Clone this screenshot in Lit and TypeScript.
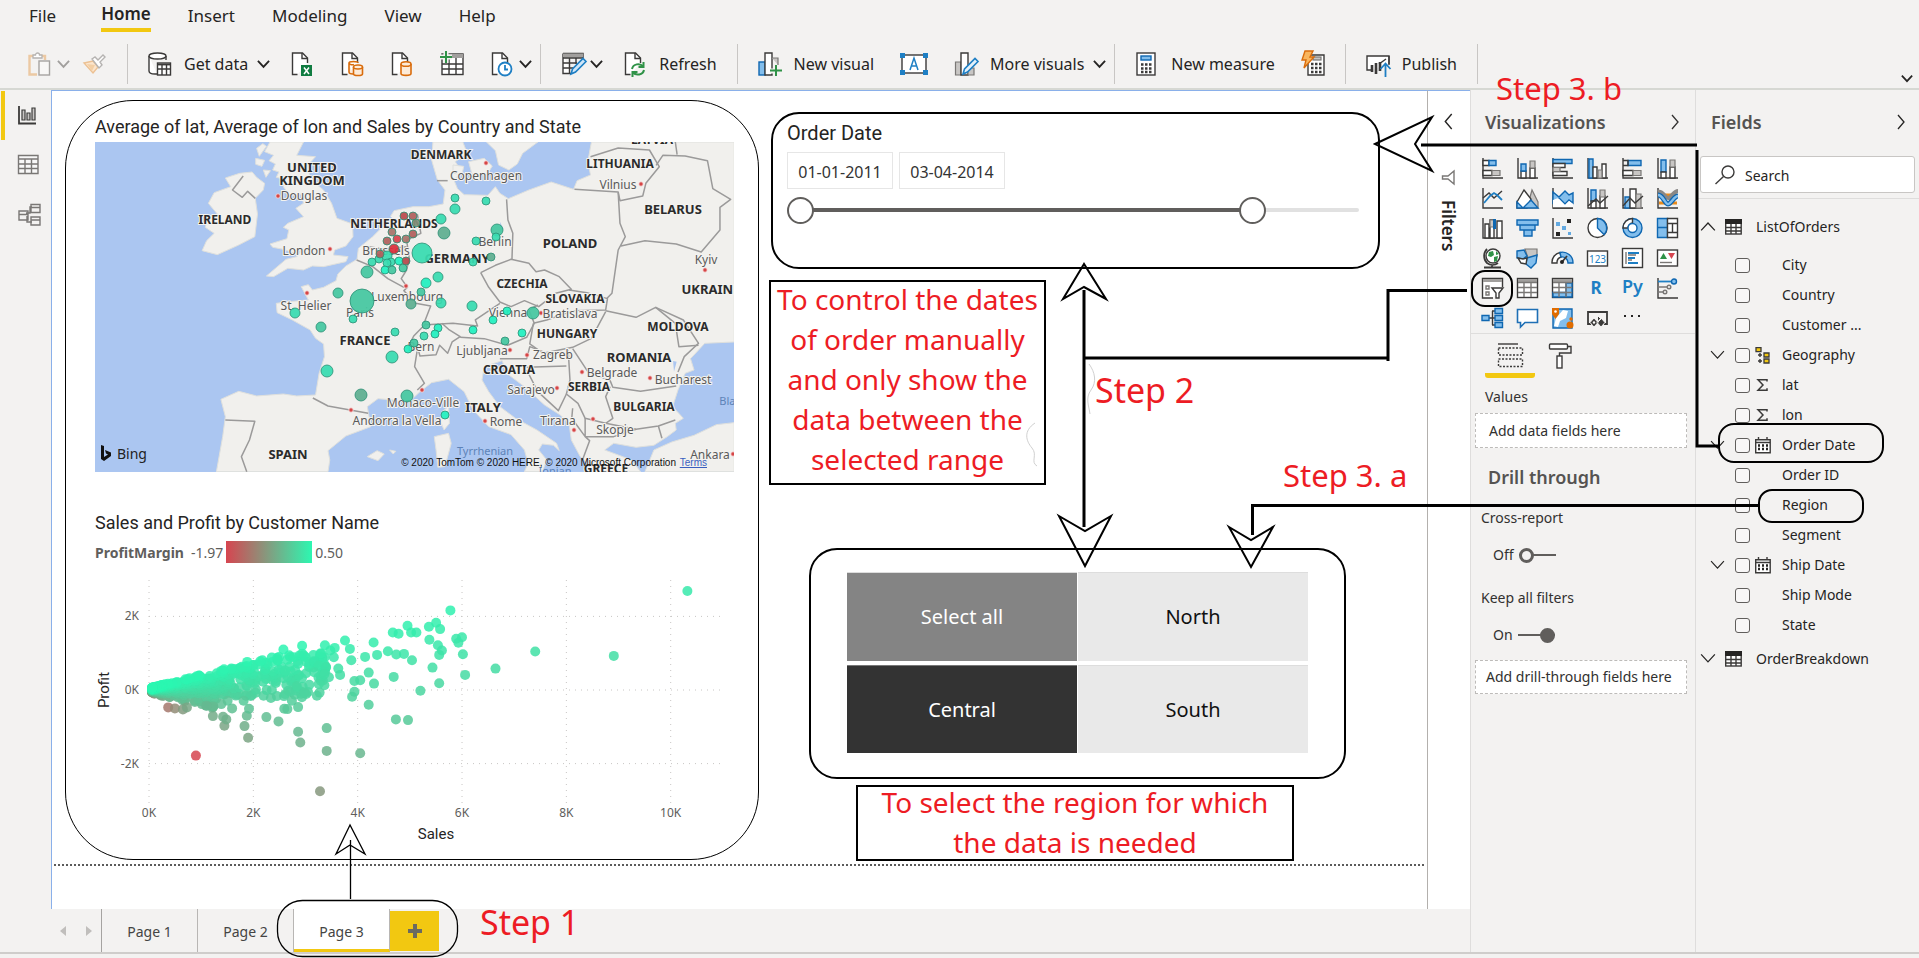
import { LitElement, html, css, svg, nothing } from 'lit';
import { customElement, state } from 'lit/decorators.js';
import { classMap } from 'lit/directives/class-map.js';

/* ---------- shared icon styles ---------- */
const iconCss = css`
  svg { display: block; overflow: visible; }
  .k { fill: none; stroke: #3b3a39; stroke-width: 1.4; }
  .k2 { fill: none; stroke: #3b3a39; stroke-width: 1.8; }
  .w { fill: #fff; stroke: #3b3a39; stroke-width: 1.4; }
  .b { fill: #83beec; stroke: #0f67b1; stroke-width: 1.4; }
  .bl { fill: none; stroke: #1e7fc4; stroke-width: 1.8; }
  .bf { fill: #1e7fc4; }
  .g { fill: #c8c6c4; stroke: #797775; stroke-width: 1.2; }
  .gl { fill: none; stroke: #797775; stroke-width: 1.4; }
  .gf { fill: #a19f9d; }
  .kf { fill: #252423; }
  .gn { fill: none; stroke: #2f9247; stroke-width: 2; }
  .or { fill: #fdebd8; stroke: #d96c0c; stroke-width: 1.6; }
`;

const chev = (d: 'down' | 'left' | 'right' | 'up', w = 13, sw = 1.5) => {
  const p = { down: 'M1 3l6 6.5L13 3', up: 'M1 10l6-6.5L13 10', left: 'M10 0L4 7l6 7', right: 'M4 0l6 7-6 7' }[d];
  return html`<svg width=${w} height=${w} viewBox="0 0 14 14" aria-hidden="true"><path d=${p} fill="none" stroke="currentColor" stroke-width=${sw}/></svg>`;
};

const page = svg`<path class="w" d="M7.500 22.500H2.500V1h10l5 5v5"/><path class="k" d="M12 1v5.500h5.500"/>`;
const TB: Record<string, unknown> = {
  paste: svg`<path d="M9 22.500H1.500V4H17v4" fill="none" stroke="#ecc9a3" stroke-width="2.400"/><path d="M5 6V3h2.500a2 2 0 0 1 4 0H14v3z" fill="#fff" stroke="#b5b3b1" stroke-width="1.300"/><rect x="11" y="9" width="10.500" height="14" fill="#f8f7f6" stroke="#a5a3a1" stroke-width="1.400"/>`,
  brush: svg`<path d="M1 11l9-2 5 6-5 6z" fill="#fbe5cc" stroke="#ecc193" stroke-width="1.400"/><path d="M4 12l8 1-3 6" fill="#f3cfa4"/><path d="M9 7l3-2 3 3 5-5 2 2-5 5 2 3-3 3z" fill="#fff" stroke="#b5b3b1" stroke-width="1.400"/>`,
  data: svg`<path class="w" d="M1 4v15c0 2 3 3 6 3h2M18 4v4"/><ellipse class="w" cx="9.500" cy="4" rx="8.500" ry="3"/><rect class="w" x="9.500" y="11" width="13" height="12"/><path class="k2" d="M9 12.500h14"/><path class="k" d="M14 13v10M18.500 13v10M9.500 17h13"/>`,
  excel: svg`${page}<rect x="11" y="13" width="11" height="11" fill="#107c41"/><path d="M14 15.500l5 6.500M19 15.500L14 22" stroke="#fff" stroke-width="1.500"/>`,
  pbi: svg`${page}<path class="or" d="M9 11v9c0 1 1 2 4 2M9 11c0-2 9-2 9 0M9 11c0 2 4 2 5 1.500"/><path class="or" d="M13.500 15v7c0 2 9 2 9 0v-7"/><ellipse class="or" cx="18" cy="15" rx="4.500" ry="2"/>`,
  sql: svg`${page}<path class="or" d="M11 12v9.500c0 2.500 10 2.500 10 0V12"/><ellipse class="or" cx="16" cy="12" rx="5" ry="2.300"/>`,
  enter: svg`<rect class="w" x="2" y="2" width="21" height="20.500"/><rect class="gf" x="8" y="2" width="15" height="4"/><path class="k" d="M2 12h21M2 17h21M9 6v16M16 6v16"/><path d="M0 5h12M6 -1v12" stroke="#f3f2f1" stroke-width="5"/><path class="gn" d="M0 5h12M6 -1v12"/>`,
  recent: svg`${page}<circle cx="15" cy="17" r="6.500" fill="#fff" stroke="#1e7fc4" stroke-width="1.800"/><path class="bl" d="M15 13v4.500h3"/>`,
  transform: svg`<path class="w" d="M2 1.500h20V8M2 1.500v20h8"/><rect class="gf" x="2" y="1.500" width="20" height="4"/><path class="k" d="M2 6h20M2 11h14M2 16h11M8.500 6v15M15 6v6"/><path d="M10 22l1.500-5L22 6.500l3 3L14.500 20z" fill="#cfe6f8" stroke="#1e7fc4" stroke-width="1.600"/>`,
  refresh: svg`${page}<path class="gn" d="M9 17c1-5 8-6.500 11-2.500M20.500 10v5h-5M21 18c-1 5-8 6-11 2.500M9.500 25v-5h5"/>`,
  visual: svg`<rect class="b" x="1" y="10" width="6" height="13"/><path class="w" d="M7 23V1h7v22z"/><path class="g" d="M14 6h6v7"/><path d="M12 19h12M18 13v11" stroke="#f3f2f1" stroke-width="5"/><path class="gn" d="M12 18.500h12M18 13v11"/>`,
  textbox: svg`<rect class="w" x="2" y="3" width="24" height="18"/><g class="bf"><path d="M0 1h5v5H0zM23 1h5v5h-5zM0 18h5v5H0zM23 18h5v5h-5z"/></g><path class="bl" style="stroke-width:1.500" d="M10 18L14 6l4 12M11.500 14h5"/>`,
  more: svg`<path class="g" d="M1.500 10H7v13H1.500z"/><path class="w" d="M7 23V1h7v22z"/><path class="g" d="M14 16h6v7h-6z"/><path d="M9 22l1.500-5L21 6.500l3 3L13.500 20z" fill="#e3f1fb" stroke="#1e7fc4" stroke-width="1.600"/>`,
  calc: svg`<rect class="w" x="2" y="1" width="18" height="22" stroke-width="2"/><rect class="b" x="6" y="4" width="10" height="4"/><path d="M6 12.500h11M6 16.500h11M6 20h11" stroke="#3b3a39" stroke-width="2.400" stroke-dasharray="2.500 1.500"/>`,
  quick: svg`<path class="w" d="M7 23V3h16v20z"/><path d="M10 12h12M10 16h12M10 20h12" stroke="#3b3a39" stroke-width="2.400" stroke-dasharray="2.500 1.500"/><rect class="g" x="12" y="5" width="8" height="3"/><path d="M4-1h8L9 5h4L3 16l2-8H1z" fill="#f9b55d" stroke="#d96c0c" stroke-width="1.400"/>`,
  publish: svg`<path class="w" d="M5 18H1V4h22v8"/><path class="k" d="M23 4v9" /><path d="M6 20v-7M10 22V11M14 19v-9" stroke="#3b3a39" stroke-width="2.600"/><path class="k" d="M13 12l7-5"/><path class="bl" d="M19.500 25V12M14.500 17l5-5.500 5 5.500"/>`,
};
const tbIcon = (n: string, w = 24) => html`<svg width=${w} height="24" viewBox="0 0 ${w} 24" aria-hidden="true">${TB[n]}</svg>`;

/* ---------- ribbon ---------- */
@customElement('pb-ribbon')
class PbRibbon extends LitElement {
  static styles = [iconCss, css`
    :host { display: block; background: #f3f2f1; color: #252423; box-shadow: 0 2px 0 #d6d8d3; position: relative; }
    button { all: unset; cursor: pointer; box-sizing: border-box; }
    nav { display: flex; gap: 37px; padding: 0 29px; height: 38px; font-size: 17px; }
    nav button { line-height: 26px; height: 32px; }
    nav button:first-child { line-height: 32px; margin-right: 8px; }
    .on { font-weight: 600; border-bottom: 4px solid #f2c811; }
    .bar { display: flex; padding: 5px 0 5px 8px; align-items: center; position: relative; }
    .grp { display: flex; gap: 26px; align-items: center; height: 40px; padding: 0 20px; border-right: 1px solid #c8c6c4; }
    .grp.tight { padding-right: 8px; }
    .grp:first-child { gap: 19px; }
    .bar button { display: flex; align-items: center; gap: 12px; font-size: 16px; white-space: nowrap; line-height: 24px; }
    .bar button.dd { gap: 5px; }
    .bar button.drop { margin-right: -6px; }
    .bar .grp.tight button.drop:last-child { margin-right: 0; }
    .mid { display: flex; gap: 9px; align-items: center; }
    .dim { color: #a19f9d; }
    .fold { margin: 30px 6px 0 auto; }
  `];
  render() {
    const b = (n: string, label: string, o: { text?: boolean; drop?: boolean; w?: number; dim?: boolean } = {}) => html`
      <button class=${classMap({ drop: !!o.drop, dd: !!o.drop && !o.text, dim: !!o.dim })} aria-label=${label}>
        ${tbIcon(n, o.w)}${o.text ? html`<span class="mid">${label}${o.drop ? chev('down', 13, 2) : nothing}</span>` : o.drop ? chev('down', 13, 2) : nothing}
      </button>`;
    return html`
      <nav>${['File', 'Home', 'Insert', 'Modeling', 'View', 'Help'].map((t) => html`<button class=${classMap({ on: t === 'Home' })}>${t}</button>`)}</nav>
      <div class="bar">
        <div class="grp">${b('paste', 'Paste', { drop: true, dim: true })}${b('brush', 'Format painter')}</div>
        <div class="grp tight">${b('data', 'Get data', { text: true, drop: true })}${b('excel', 'Excel')}${b('pbi', 'Datasets')}${b('sql', 'SQL Server')}${b('enter', 'Enter data')}${b('recent', 'Recent sources', { drop: true })}</div>
        <div class="grp">${b('transform', 'Transform data', { drop: true })}${b('refresh', 'Refresh', { text: true })}</div>
        <div class="grp tight">${b('visual', 'New visual', { text: true })}${b('textbox', 'Text box', { w: 28 })}${b('more', 'More visuals', { text: true, drop: true })}</div>
        <div class="grp">${b('calc', 'New measure', { text: true })}${b('quick', 'Quick measure')}</div>
        <div class="grp">${b('publish', 'Publish', { text: true })}</div>
        <button class="fold" aria-label="Collapse ribbon">${chev('down', 12, 2)}</button>
      </div>`;
  }
}

const mx = (x: number) => Math.round((x - 78) / 2.24);
const my = (y: number) => Math.round((y - 156) / 3);
const LAND = [
  'M470 156L458 185 478 196 468 212 482 222 476 240 490 246 484 262 505 268 500 290 515 318 540 312 545 340 528 355 545 380 510 400 500 412 512 420 508 446 470 462 476 472 500 478 522 488 540 482 530 500 506 508 462 558 478 560 510 535 545 540 565 528 590 530 640 515 645 500 612 495 615 480 640 468 656 440 655 402 620 385 608 340 590 300 560 268 555 225 572 200 530 196 545 156Z',
  'M345 308L382 290 370 264 402 250 430 246 440 262 458 280 455 300 437 325 442 372 436 440 400 465 352 494 318 482 328 452 345 430 325 412 330 388 352 372 332 340Z',
  'M440 175l14 -14 8 8 -16 30zM438 205l20 6 -6 18 -14 -6zM455 240l16 2 -10 20z',
  'M835 156L832 210 845 270 862 300 858 342 826 350 790 350 748 362 730 400 700 440 668 475 665 508 640 528 622 552 618 572 590 592 565 600 556 584 540 590 556 630 520 634 484 640 486 668 520 690 560 720 572 745 590 762 592 800 580 850 572 915 530 918 500 912 440 918 400 904 360 928 370 980 364 1040 350 1145 600 1145 604 1110 600 1082 640 1038 696 1010 688 950 712 926 745 930 780 938 806 905 832 878 870 868 905 905 925 960 960 1010 1010 1034 1040 1080 1048 1120 1040 1145 1080 1145 1090 1110 1072 1080 1080 1062 1105 1066 1118 1082 1112 1060 1068 1020 1020 985 985 950 960 905 945 870 950 830 990 812 1000 850 1040 890 1085 945 1120 975 1140 1000 1145 1050 1165 1100 1200 1145 1300 1145 1280 1110 1220 1080 1240 1060 1290 1072 1330 1066 1360 1040 1380 1020 1378 1000 1396 985 1372 950 1384 900 1400 850 1420 840 1412 806 1444 760 1510 756V156H1190L1182 215 1188 255 1158 272 1150 298 1100 276 1050 300 1004 326 985 310 975 290 958 316 905 314 890 296 882 270 900 245 885 215 912 190 902 156Z',
  'M915 215L950 205 968 228 955 256 922 250ZM880 225l24 4 -4 26 -20 -6z',
  'M955 156L975 182 982 225 1005 240 1024 222 1036 190 1070 156Z',
  'M1510 998L1470 1004 1420 1036 1370 1056 1330 1080 1310 1145 1510 1145Z',
  'M855 965L870 950 872 1000 860 1020 852 995Z', 'M838 1040L870 1030 876 1060 862 1130 846 1132 842 1080Z',
  'M688 1100L710 1082 726 1092 712 1112ZM738 1080l14 4 -6 8z',
];
const WATER = ['M1375 845l6 -30 -8 -2zM640 470l20 -8 -8 16zM735 375l14 14 6 22 -12 -4z', 'M985 395l8 22 -6 4z'];
const LINES = [
  'M410 258L386 300 408 322 420 304 437 325', 'M800 372L808 430 776 450 782 505 776 540 764 566 778 592 770 602 796 640 830 648 815 700',
  'M844 272H868', 'M1000 328L1003 390 1014 430 1012 510', 'M942 548L975 526 1010 508 1050 520 1066 545 1085 540 1118 560 1145 598 1110 610 1072 650 1040 632 1010 650 985 636 960 592 942 548',
  'M985 640L930 690 935 708 880 700 820 704', 'M820 700L792 738 778 775 800 770 806 798 842 794 850 766 868 790 878 756 896 740 870 718 855 700',
  'M800 780L794 830 816 880 800 900', 'M896 742L950 746 1002 766 1045 742 1062 700 1050 660 1070 645', 'M1250 308L1254 400 1266 440 1250 480 1236 610 1225 625',
  'M1152 298L1250 306 1254 332 1305 318 1312 280 1342 230 1320 180 1250 174 1188 200', 'M1335 226L1350 196 1400 198 1450 212 1462 296 1502 328 1478 352 1478 420 1436 486 1380 462 1310 452 1256 468',
  'M1378 156L1382 194', 'M1140 600L1180 608 1226 626 1222 660 1150 662 1090 690 1060 700', 'M1222 665L1190 745 1148 772 1082 790 1052 762 1060 700', 'M1222 662L1290 682 1334 652 1378 700 1386 770 1430 766',
  'M1334 652L1396 690 1430 760 1398 800 1384 846', 'M1148 776L1182 845 1232 872 1238 892 1300 904 1380 888', 'M1232 890L1222 920 1238 985 1222 1000 1290 1018 1340 1008 1378 990', 'M1138 780L1142 870 1134 912 1160 940 1176 985 1222 1000',
  'M985 806L1045 806 1052 770 1110 800', 'M1045 832L1134 828M1045 840L1070 905 1116 962 1134 912', 'M1148 955L1146 985 1176 1040 1240 1040 1290 1018M1176 985V1040L1186 1052 1170 1110',
  'M566 924L600 948 690 970', 'M370 990L436 994 424 1050 406 1100 418 1145', 'M664 510L700 530 734 566 770 592', 'M690 470L730 478 776 470', 'M1340 1008L1348 1045',
];
const NATIONS: [number, number, string, boolean?][] = [[563, 247, 'UNITED', true], [563, 286, 'KINGDOM', true], [370, 402, 'IRELAND'], [852, 208, 'DENMARK'], [1255, 234, 'LITHUANIA'], [1325, 162, 'LATVIA'], [1372, 372, 'BELARUS', true], [1141, 475, 'POLAND', true], [748, 414, 'NETHERLANDS'], [890, 520, 'GERMANY', true], [1035, 595, 'CZECHIA'], [1153, 640, 'SLOVAKIA'], [683, 766, 'FRANCE', true], [1135, 744, 'HUNGARY'], [1385, 724, 'MOLDOVA'], [1296, 817, 'ROMANIA', true], [1005, 853, 'CROATIA'], [1184, 904, 'SERBIA'], [1308, 963, 'BULGARIA'], [948, 966, 'ITALY', true], [511, 1107, 'SPAIN', true], [1222, 1148, 'GREECE'], [1458, 611, 'UKRAINE', true]];
const CITIES: [number, number, string][] = [[546, 330, 'Douglas'], [954, 271, 'Copenhagen'], [1249, 296, 'Vilnius'], [546, 494, 'London'], [730, 494, 'Brussels'], [975, 468, 'Berlin'], [1446, 523, 'Kyiv'], [551, 660, 'St. Helier'], [671, 681, 'Paris'], [777, 634, 'Luxembourg'], [1003, 681, 'Vienna'], [1142, 685, 'Bratislava'], [808, 783, 'Bern'], [946, 796, 'Ljubljana'], [1104, 808, 'Zagreb'], [1235, 862, 'Belgrade'], [1394, 881, 'Bucharest'], [1055, 912, 'Sarajevo'], [812, 950, 'Monaco-Ville'], [754, 1004, 'Andorra la Vella'], [999, 1009, 'Rome'], [1115, 1004, 'Tirana'], [1243, 1031, 'Skopje'], [1456, 1106, 'Ankara']];
const CAPITALS = [[487, 317], [954, 219], [1300, 282], [604, 478], [552, 609], [775, 587], [1444, 539], [1077, 668], [1007, 781], [1046, 794], [1169, 845], [1322, 864], [1113, 895], [811, 900], [651, 961], [952, 994], [1151, 1020], [1194, 987], [1507, 1092]];
const T1 = '#38dcb0', T2 = '#45c7a0', T3 = '#5fae90', T4 = '#20f0c0', R1 = '#b2605c', R2 = '#d8424c', R3 = '#a8736a', R4 = '#839078';
const SALES: [number, number, number, string][] = [
  [676, 632, 12, T2], [811, 490, 10, T1], [978, 419, 6, T2], [1060, 668, 6, T2], [776, 917, 6, T2], [674, 915, 6, T3], [598, 844, 6, T1], [744, 801, 6, T1], [687, 545, 6, T2], [860, 430, 6, T3], [923, 648, 5, T1], [854, 639, 5, T1], [786, 642, 5, T3],
  [885, 324, 4, T1], [885, 357, 5, T1], [954, 333, 4, T1], [852, 386, 5, T1], [932, 452, 4, T1], [977, 440, 4, T1], [966, 500, 4, T3], [924, 515, 4, T1], [847, 561, 5, T1], [820, 580, 5, T4], [808, 605, 4, T2], [623, 610, 5, T2], [527, 670, 5, T1], [585, 710, 5, T2], [655, 688, 4, T1], [750, 727, 4, T1],
  [699, 517, 4, T1], [715, 508, 4, T1], [733, 497, 5, T1], [740, 516, 4, T1], [732, 518, 4, T1], [728, 541, 4, T4], [744, 541, 4, T2], [760, 513, 4, T4], [767, 534, 4, T2],
  [820, 704, 4, T2], [847, 713, 4, T4], [839, 731, 4, T4], [815, 737, 4, T1], [793, 760, 4, T2], [780, 777, 4, T4], [924, 720, 4, T4], [969, 690, 4, T4], [1002, 664, 4, T4], [1035, 730, 4, T4], [997, 754, 4, T2], [861, 976, 4, T4],
  [771, 378, 4, '#ba4a4e'], [791, 378, 4, R1], [797, 399, 4, R4], [744, 427, 4, R3], [790, 431, 4, R1], [754, 446, 4, R2], [774, 447, 4, R3], [733, 453, 4, R1], [747, 478, 5, '#dc2f3c'], [717, 491, 4, R1], [775, 513, 4, '#b5484c'],
];

/* ---------- scatter data: [sales, profit] ---------- */
const mark = (x: number, y: number): [number, number] => [Math.round((x - 200) * 8.558), Math.round((598 - y) * 9.09)];
const OUT: [number, number][] = ([[1406, 302], [875, 360], [843, 397], [852, 416], [827, 409], [779, 406], [787, 426], [799, 426], [746, 426], [759, 430], [828, 448], [888, 445], [901, 440], [893, 457], [847, 464], [856, 480], [850, 493], [903, 491], [1065, 483], [1241, 496], [976, 534], [908, 553], [835, 531], [850, 578], [808, 600], [703, 456], [735, 482], [754, 492], [771, 490], [711, 493], [684, 499], [789, 509], [748, 559], [692, 546], [704, 579], [692, 642], [753, 686], [780, 688], [673, 787], [598, 712], [598, 780], [583, 901], [534, 723], [539, 755], [490, 692], [463, 679], [422, 741], [414, 706], [419, 675], [424, 654], [369, 705], [373, 686], [366, 678], [343, 676], [305, 794], [243, 650], [258, 653], [276, 656], [285, 650], [639, 450], [650, 475], [653, 509], [594, 464], [543, 466], [501, 477], [616, 472], [586, 489], [606, 480], [614, 500], [624, 534], [628, 553], [603, 560], [660, 571], [673, 569], [660, 603], [655, 618], [576, 615], [593, 584], [580, 580], [559, 582], [548, 605], [531, 586], [520, 630], [534, 649], [503, 654], [510, 655], [473, 622], [386, 653], [412, 630], [376, 630], [362, 640], [344, 647], [329, 645], [547, 495], [524, 500], [569, 512], [580, 525], [596, 530], [475, 501], [489, 509], [449, 512], [420, 514], [593, 550], [570, 545], [552, 548], [505, 540], [512, 600], [505, 610]] as [number, number][]).map(([x, y]) => mark(x, y));
const cloud = (): [number, number][] => {
  let s = 20114;
  const rnd = () => ((s = (s * 16807) % 2147483647) / 2147483647);
  const pts: [number, number][] = [];
  for (let i = 0; i < 560; i++) {
    const sales = 60 + 3350 * Math.pow(rnd(), 2.5);
    const top = Math.min(0.36 * sales + 45, 820 + 0.06 * sales);
    const low = -0.05 * sales - 70;
    pts.push([sales, low + (top - low) * rnd()]);
  }
  for (let i = 0; i < 34; i++) {
    const sales = 100 + 1200 * rnd();
    pts.push([sales, -70 - sales * (0.1 + 0.24 * rnd())]);
  }
  return pts.sort((a, b) => a[1] / a[0] - b[1] / b[0]);
};
const hue = (sales: number, profit: number) => {
  const t = Math.max(0, Math.min(1, (profit / sales + 1.97) / 2.42));
  const c = (a: number, b: number) => Math.round(a + (b - a) * t);
  return `rgb(${c(214, 42)},${c(69, 247)},${c(80, 178)})`;
};
const POINTS = [...cloud(), ...OUT];
const sx = (v: number) => 54 + v * 0.05217;
const sy = (v: number) => 127 - v * 0.0368;

/* ---------- report canvas ---------- */
@customElement('pb-report')
class PbReport extends LitElement {
  static properties = { from: { type: Number }, to: { type: Number }, region: {} };
  from = 0;
  to = 83;
  region = 'Central';
  static styles = [iconCss, css`
    :host { display: flex; flex-direction: column; background: #fff; border: 1px solid #8ab0ea; border-width: 1px 0 0 1px; box-sizing: border-box; }
    .page { display: grid; grid-template-columns: 694px minmax(0, 1fr); gap: 10px; padding: 9px 0 0 13px; flex: 0 0 auto; }
    .edge { height: 2px; margin: 3px 2px 0; background: repeating-linear-gradient(90deg, #5b5b5b 0 2px, #fff 2px 4px); }
    .left { border: 1px solid #000; border-radius: 68px; padding: 14px 24px 10px 29px; height: 760px; box-sizing: border-box; }
    h2 { font: 400 18px/24px Roboto, "Noto Sans", sans-serif; color: #252423; margin: 0; }
    .map { background: #abc6f1; height: 330px; width: 639px; margin-top: 3px; overflow: hidden; }
    .land { fill: #f1f0ed; stroke: #dfe0dd; stroke-width: 1; vector-effect: non-scaling-stroke; }
    .water { fill: #abc6f1; }
    .line { fill: none; stroke: #9b9a9a; stroke-width: 1.5; vector-effect: non-scaling-stroke; stroke-linejoin: round; }
    .map text { text-anchor: middle; paint-order: stroke; stroke: #f4f3f0; stroke-width: 2px; }
    .nation { font: 700 12px "Noto Sans", sans-serif; fill: #2b2b2b; }
    .nation.big { font-size: 13px; }
    .city { font: 400 12px "Noto Sans", sans-serif; fill: #5a5a5a; }
    .map .sea { font: 400 11px "Noto Sans", sans-serif; fill: #5d83b8; stroke: none; }
    .map .brand { font: 400 14px "Noto Sans", sans-serif; fill: #222; stroke: none; text-anchor: start; }
    .map .legal { font: 400 10px "Liberation Sans", sans-serif; fill: #111; stroke: none; text-anchor: end; }
    .map .terms { fill: #3a5fc0; text-decoration: underline; }
    .second { margin-top: 39px; }
    .legend { display: flex; align-items: center; gap: 7px; height: 22px; margin-top: 6px; font-size: 14px; color: #605e5c; }
    .legend b { font-weight: 700; }
    .legend i { width: 86px; height: 22px; margin: 0 -4px; background: linear-gradient(90deg, #d64550, #2df7b1); }
    .plot line { stroke: #c8c6c4; stroke-width: 1; stroke-dasharray: 1 5; }
    .plot text { font-size: 12px; fill: #605e5c; }
    .plot .axis { font: 400 15px Roboto, "Noto Sans", sans-serif; fill: #252423; text-anchor: middle; }
    .mid { text-anchor: middle; } .end { text-anchor: end; }
    .right { display: flex; flex-direction: column; align-items: flex-start; padding-top: 12px; }
    .date { width: 609px; height: 157px; margin-left: 2px; box-sizing: border-box; border: 2px solid #000; border-radius: 28px; padding: 6px 19px 0 14px; }
    .date h2 { font-size: 20px; line-height: 26px; }
    .inputs { display: flex; gap: 6px; margin-top: 6px; }
    .inputs input { width: 106px; height: 37px; box-sizing: border-box; border: 1px solid #e6e6e6; font: 16px "Noto Sans", sans-serif; color: #333; text-align: center; padding: 2px 0 0; background: #fff; }
    .slider { display: grid; align-items: center; margin-top: 7px; height: 28px; width: 572px; }
    .slider > * { grid-area: 1 / 1; }
    .track { height: 4px; margin-left: 13px; background: #e1e1e1; border-radius: 2px; }
    .fill { height: 4px; background: #605e5c; }
    .slider input { appearance: none; background: none; margin: 0; width: 100%; height: 28px; pointer-events: none; }
    .slider input::-webkit-slider-thumb { appearance: none; pointer-events: auto; width: 27px; height: 27px; box-sizing: border-box; border: 2px solid #605e5c; border-radius: 50%; background: #fff; }
    .note { box-sizing: border-box; border: 2px solid #000; color: #ed1c24; font-size: 28px; line-height: 40px; text-align: center; background: #fff; margin: 0; display: flex; flex-direction: column; justify-content: flex-end; }
    .n1 { width: 277px; height: 205px; margin-top: 11px; padding-bottom: 4px; }
    .n2 { width: 438px; height: 76px; margin: 6px 0 0 87px; justify-content: center; padding-bottom: 3px; }
    .region { width: 537px; height: 231px; box-sizing: border-box; border: 2px solid #000; border-radius: 28px; margin: 63px 0 0 40px; padding: 22px 36px 24px; display: grid; grid-template-columns: 1fr 1fr; gap: 4px 1px; }
    .region button { border: 0; border-top: 1px solid #ddd; background: #e9e9e9; font: 20px "Noto Sans", sans-serif; color: #111; }
    .region .all { background: #848484; color: #fff; }
    .region .sel { background: #333; color: #fff; border-color: #777; }
  `];
  render() {
    return html`
      <div class="page">
        <section class="left">
          <h2>Average of lat, Average of lon and Sales by Country and State</h2>
          <div class="map">
            <svg width="639" height="330" role="img" aria-label="Map of sales">
              <g transform="scale(.4464 .3333) translate(-78 -156)">
                ${LAND.map((d) => svg`<path class="land" d=${d}/>`)}${WATER.map((d) => svg`<path class="water" d=${d}/>`)}${LINES.map((d) => svg`<path class="line" d=${d}/>`)}
              </g>
              ${CAPITALS.map(([x, y]) => svg`<circle cx=${mx(x)} cy=${my(y)} r="2.200" fill="#d64545" stroke="#f6dede" stroke-width=".8"/>`)}
              ${CITIES.map(([x, y, t]) => svg`<text class="city" x=${mx(x)} y=${my(y)}>${t}</text>`)}
              ${NATIONS.map(([x, y, t, big]) => svg`<text class=${big ? 'nation big' : 'nation'} x=${mx(x)} y=${my(y)}>${t}</text>`)}
              <text class="sea" x="390" y="313">Tyrrhenian</text><text class="sea" x="460" y="333">Ionian</text><text class="sea" x="638" y="263">Black</text>
              ${SALES.map(([x, y, r, c]) => svg`<circle cx=${mx(x)} cy=${my(y)} r=${r} fill=${c} fill-opacity=".93" stroke="#2b8f74" stroke-opacity=".8"/>`)}
              <path d="M6 303l3 1v11l4-2.500-2-1-1-3.500 6 2.500v3.500L9 319l-3-2z" fill="#111"/>
              <text class="brand" x="22" y="317">Bing</text>
              <text class="legal" x="581" y="324">© 2020 TomTom © 2020 HERE, © 2020 Microsoft Corporation</text>
              <text class="legal terms" x="612" y="324">Terms</text>
            </svg>
          </div>
          <h2 class="second">Sales and Profit by Customer Name</h2>
          <div class="legend"><b>ProfitMargin</b><span>-1.97</span><i></i><span>0.50</span></div>
          <svg class="plot" width="640" height="285" role="img" aria-label="Sales and profit scatter chart">
            ${[0, 2, 4, 6, 8, 10].map((k) => svg`<line x1=${sx(k * 1000)} x2=${sx(k * 1000)} y1="17" y2="240"/><text class="mid" x=${sx(k * 1000)} y="254">${k}K</text>`)}
            ${[2, 0, -2].map((k) => svg`<line x1="54" x2="629" y1=${sy(k * 1000)} y2=${sy(k * 1000)}/><text class="end" x="44" y=${sy(k * 1000) + 4}>${k}K</text>`)}
            ${POINTS.map(([s, p]) => svg`<circle cx=${sx(s).toFixed(1)} cy=${sy(p).toFixed(1)} r="5" fill=${hue(s, p)} fill-opacity=".85"/>`)}
            <text class="axis" x="341" y="276">Sales</text>
            <text class="axis" transform="translate(14 127) rotate(-90)">Profit</text>
          </svg>
        </section>
        <section class="right">
          <div class="date">
            <h2>Order Date</h2>
            <div class="inputs"><input aria-label="From" value="01-01-2011"><input aria-label="To" value="03-04-2014"></div>
            <div class="slider">
              <div class="track"><div class="fill" style="width:${this.to}%"></div></div>
              <input type="range" aria-label="Start date" .value=${String(this.from)}>
              <input type="range" aria-label="End date" .value=${String(this.to)} @input=${(e: Event) => (this.to = +(e.target as HTMLInputElement).value)}>
            </div>
          </div>
          <p class="note n1"><span>To control the dates</span><span>of order manually</span><span>and only show the</span><span>data between the</span><span>selected range</span></p>
          <div class="region">
            ${['Select all', 'North', 'Central', 'South'].map((r) => html`<button class=${classMap({ all: r === 'Select all', sel: r === this.region })} @click=${() => (this.region = r)}>${r}</button>`)}
          </div>
          <p class="note n2"><span>To select the region for which</span><span>the data is needed</span></p>
        </section>
      </div>
      <div class="edge"></div>`;
  }
}

/* ---------- visualizations pane ---------- */
const ax = svg`<path class="k" d="M1 0v20h20"/>`;
const VIS: [string, unknown][] = [
  ['Stacked bar chart', svg`${ax}<path class="w" d="M1 2.500h6v5H1zM1 12.500h9v5H1z"/><path class="b" d="M7 2.500h7v5H7z"/><path class="g" d="M10 12.500h8v5h-8z"/>`],
  ['Stacked column chart', svg`${ax}<path class="w" d="M4 13h5v7H4zM13 10h5v10h-5z"/><path class="b" d="M4 6h5v7H4z"/><path class="g" d="M13 3h5v7h-5z"/>`],
  ['Clustered bar chart', svg`${ax}<path class="b" d="M1 1.500h19v4H1z"/><path class="w" d="M1 5.500h12v4H1zM1 13.500h14v4H1z"/><path class="g" d="M1 9.500h7v4H1z"/>`],
  ['Clustered column chart', svg`${ax}<path class="b" d="M2 1h4v19H2z"/><path class="w" d="M6 9h4v11H6zM15 6h4v14h-4z"/><path class="g" d="M11 12h4v8h-4z"/>`],
  ['100% stacked bar chart', svg`${ax}<path class="w" d="M1 12.500h10v5H1z"/><path class="b" d="M6 2.500h13v5H6z"/><path class="k" d="M1 2.500h5v5H1"/><path class="g" d="M11 12.500h8v5h-8z"/>`],
  ['100% stacked column chart', svg`${ax}<path class="b" d="M4 2h5v12H4z"/><path class="w" d="M4 14h5v6H4zM13 9h5v11h-5z"/><path class="g" d="M13 2h5v7h-5z"/>`],
  ['Line chart', svg`${ax}<path class="k" d="M1 10l6-5 5 5 8-7"/><path class="bl" d="M2 15l6-7 4-3 3 2 5 5"/>`],
  ['Area chart', svg`<path class="g" d="M10 20L15 2l6 12v6z"/><path class="w" d="M0 14L7 2l7 9-4 9H0z"/><path class="b" d="M0 14l6 6H0zM6 20l8-8 7 8z"/>`],
  ['Stacked area chart', svg`${ax}<path class="b" d="M1 4l6 5 6-6 4 4 4-2v10l-4-3-4 4-6-6-6 5z"/><path d="M1 12l5-2 7 7 4-4 4 3v4H1z" fill="#fff"/><path class="k" d="M1 20h20"/>`],
  ['Line and stacked column', svg`${ax}<path class="b" d="M4 2h5v11H4z"/><path class="w" d="M4 13h5v7H4zM13 8h5v12h-5z"/><path class="g" d="M13 2h5v7h-5z"/><path class="k" d="M1 18l8-7 4 4 8-7"/>`],
  ['Line and clustered column', svg`${ax}<path class="b" d="M3 9h5v11H3z"/><path class="w" d="M8 1h6v19H8z"/><path class="g" d="M14 6h5v14h-5z"/><path class="k" d="M1 18l7-8 5 5 8-7"/>`],
  ['Ribbon chart', svg`${ax}<path d="M2 7h18M2 15h18" stroke="#e88a1a" stroke-width="3"/><path d="M1 4c5-2 8 8 11 6s5-7 9-7" fill="none" stroke="#8a8886" stroke-width="4"/><path d="M1 7c5 0 7 9 10 9s6-8 10-8" fill="none" stroke="#0f67b1" stroke-width="5"/><path d="M1 7c5 0 7 9 10 9s6-8 10-8" fill="none" stroke="#83beec" stroke-width="2.400"/>`],
  ['Waterfall chart', svg`${ax}<path class="w" d="M3 6h4v14H3zM8 2h4v18H8z"/><path class="g" d="M8 2h4v7H8z"/><path d="M12.500 1v10" stroke="#0f67b1" stroke-width="3"/><path class="w" d="M15 3h5v17h-5z"/>`],
  ['Funnel', svg`<path class="b" d="M0 2h21v5H0zM3 7h15v5H3zM7 12h8v6H7z"/>`],
  ['Scatter chart', svg`${ax}<path class="bf" style="fill:#63a9e0" d="M4 4h4v4H4zM10 8h4v4h-4zM16 14h3v3h-3z"/><path class="kf" d="M15 1h4v4h-4zM4 14h4v4H4z"/>`],
  ['Pie chart', svg`<circle class="w" cx="10.500" cy="10" r="9.500"/><path class="b" d="M10.500 10V.5a9.500 9.500 0 0 1 6.500 16z"/>`],
  ['Donut chart', svg`<circle class="b" cx="10.500" cy="10" r="9.500"/><path class="w" d="M10.500.5A9.500 9.500 0 0 0 1 10h5a5 5 0 0 1 4.500-5z"/><circle cx="10.500" cy="10" r="4.500" fill="#fff" stroke="#0f67b1" stroke-width="1.400"/>`],
  ['Treemap', svg`<path class="b" d="M.5.5h10v9H.5zM.5 9.500h10v10H.5z"/><path class="w" d="M10.500.5h10v5h-10zM10.500 5.500h5v9h-5zM15.500 5.500h5v9h-5zM10.500 14.500h10v5h-10z"/>`],
  ['Map', svg`<path class="k2" d="M5 1a10 10 0 0 0 0 14 9 9 0 0 0 11 0M2 19.500h17M10 17v2"/><circle class="w" cx="11" cy="8" r="7"/><path d="M7 4l4-1 1 4-3 2-3-1zM12 9l4-1-1 5-3 1zM14 3l3 3-3 1z" fill="#2f9247"/>`],
  ['Filled map', svg`<path class="g" d="M8 1l12 0v7l-9 2z"/><path class="b" d="M0 3l7-1 3 6-4 3-6-1zM10 10l10-3-1 8-5 5-5-4z"/><path class="w" d="M1 10l5 1 4-1-1 6-5-1z"/>`],
  ['Gauge', svg`<path class="w" d="M0 15A10 10 0 0 1 8 4.500L9 9a6 6 0 0 0-4 6z"/><path class="b" d="M8 4.500A10.500 10.500 0 0 1 21 15h-5a6 6 0 0 0-7-6z"/><path class="k2" d="M10 14l5-6"/><circle class="kf" cx="10" cy="14" r="2"/>`],
  ['Card', svg`<rect class="w" x=".5" y="3" width="20" height="15"/><text x="10.500" y="15" text-anchor="middle" font-size="10" fill="#1e7fc4">123</text>`],
  ['Multi-row card', svg`<rect class="w" x=".5" y=".5" width="20" height="19"/><path class="gl" d="M4 4v12"/><path class="bl" d="M6 5h11M6 10h7M6 15h10"/><path class="gl" d="M6 7h8M6 12h4"/>`],
  ['KPI', svg`<rect class="w" x=".5" y="2" width="20" height="16"/><path d="M3 11l3.500-6 3.500 6z" fill="#2f9247"/><path d="M11 5h7l-3.500 6z" fill="#d64550"/><path class="gl" d="M3 14.500h12"/>`],
  ['Slicer', svg`<path class="w" d="M11 20H.5V.5h20V9"/><path class="gf" d="M1 1h19v3H1z"/><path class="gl" d="M4 8h3v3H4zM4 14h3v3H4z"/><path class="w" d="M10 10h11l-4 5v5h-3v-5z"/>`],
  ['Table', svg`<rect class="w" x=".5" y=".5" width="20" height="19"/><path class="gf" d="M1 1h19v3H1z"/><path class="gl" d="M1 4.500h19M1 9.500h19M1 14.500h19M7 4v15M14 4v15"/>`],
  ['Matrix', svg`<rect class="w" x=".5" y=".5" width="20" height="19"/><path class="gf" d="M1 1h19v3H1z"/><path class="b" d="M14 5h6v14H14zM1 14.500h13V19H1z"/><path class="gl" d="M1 4.500h19M1 9.500h19M1 14.500h19M7 4v15M14 4v15"/>`],
  ['R script visual', svg`<text x="9" y="16" text-anchor="middle" font-size="17" font-weight="700" fill="#1e7fc4">R</text>`],
  ['Python visual', svg`<text x="10.500" y="15" text-anchor="middle" font-size="18" font-weight="600" fill="#1e7fc4">Py</text>`],
  ['Key influencers', svg`${ax}<path class="bl" d="M1 3.500h14"/><circle class="b" cx="17" cy="3.500" r="2.500"/><path class="gl" d="M1 9h9M1 14h5"/><circle class="gl" cx="12" cy="9" r="1.800"/><circle class="gl" cx="8" cy="14" r="1.800"/>`],
  ['Decomposition tree', svg`<path class="k" d="M7 10h7M10.500 3v14M10 3h4M10 17h4"/><path class="b" d="M0 7.500h7v5H0zM13 .5h7.500v5H13zM13 7.500h7.500v5H13zM13 14.500h7.500v5H13z"/>`],
  ['Q&A', svg`<path d="M.5 1.500h20v13H8L3.500 19v-4.500h-3z" fill="#fff" stroke="#1e6fb5" stroke-width="1.600"/>`],
  ['ArcGIS map', svg`<path class="b" d="M1 1h19v19H1z"/><path d="M11 2l5 1-2 7-6 3-2 6-4-1 2-8z" fill="#fff"/><path d="M0 0h7v6l-3.500 5L0 6z" fill="#e06c00"/><circle cx="3.500" cy="3.500" r="1.300" fill="#fff"/><circle cx="18" cy="17" r="3.500" fill="#e06c00"/><circle cx="19" cy="11" r="1.700" fill="#e06c00"/>`],
  ['Power Apps', svg`<path class="k2" d="M4 16H1V4h19v12h-3"/><path d="M7 10l4 4.500L7 19l-4-4.500zM11 8l3 3-3 3M14 10l4 4.500-4 4.500-4-4.500z" fill="#3b3a39" stroke="#f3f2f1"/><circle cx="7" cy="14.500" r="1.200" fill="#fff"/>`],
  ['More', svg`<path class="kf" d="M2 7h2v2H2zM9 7h2v2H9zM16 7h2v2h-2z"/>`],
];

@customElement('pb-visualizations')
class PbVisualizations extends LitElement {
  static styles = [iconCss, css`
    :host { display: block; background: #f3f2f1; border: 1px solid #dedddc; border-width: 0 1px 0 1px; box-sizing: border-box; font-size: 14px; line-height: 22px; color: #323130; }
    button { all: unset; cursor: pointer; }
    header { display: flex; justify-content: space-between; align-items: center; height: 63px; padding: 0 13px 0 14px; box-sizing: border-box; }
    h2 { font-size: 18px; line-height: 26px; font-weight: 600; color: #555351; margin: 0; }
    .grid { display: grid; grid-template-columns: repeat(6, 35px); grid-auto-rows: 30px; padding-left: 4px; border-bottom: 1px solid #dedddc; }
    .grid button { display: grid; place-items: center; }
    .tabs { display: flex; padding: 9px 0 0 14px; }
    .tabs button { display: flex; flex-direction: column; align-items: center; gap: 5px; width: 50px; height: 36px; }
    .tabs .on { border-bottom: 5px solid #f2c811; height: 30px; border-radius: 0 0 3px 3px; }
    h3 { font-size: 14px; font-weight: 400; margin: 7px 0 5px 14px; line-height: 22px; }
    .well { background: #fff; border: 1px dashed #bdbbb9; height: 35px; box-sizing: border-box; line-height: 34px; margin: 0 8px 0 4px; padding-left: 13px; }
    .well.low { padding-left: 10px; height: 34px; line-height: 32px; }
    .drill { margin: 16px 0 17px 17px; }
    .opt { margin: 0 0 0 10px; }
    .row { display: flex; align-items: center; gap: 5px; margin: 15px 0 21px 22px; }
    .row:nth-last-of-type(2) { margin-bottom: 14px; }
    .row label { min-width: 20px; }
    .sw { appearance: none; margin: 0; width: 37px; height: 16px; background: linear-gradient(#605e5c, #605e5c) 0 7px / 100% 2px no-repeat; display: flex; align-items: center; }
    .sw::before { content: ''; width: 15px; height: 15px; box-sizing: border-box; border-radius: 50%; border: 3px solid #605e5c; background: #f3f2f1; }
    .sw:checked::before { margin-left: auto; background: #605e5c; }
  `];
  render() {
    return html`
      <header><h2>Visualizations</h2><button aria-label="Collapse">${chev('right', 14, 1.3)}</button></header>
      <div class="grid">${VIS.map(([n, i]) => html`<button title=${n} aria-label=${n}><svg width="21" height="20" viewBox="0 0 21 20">${i}</svg></button>`)}</div>
      <div class="tabs">
        <button class="on" aria-label="Fields"><svg width="25" height="26" viewBox="0 0 25 26"><path class="k" d="M0 1h20"/><path class="k" stroke-dasharray="2 1.500" d="M.5 5h24v7H.5zM.5 16h24v7.500H.5z"/></svg></button>
        <button aria-label="Format"><svg width="23" height="26" viewBox="0 0 23 26"><rect class="w" x=".5" y="1" width="18" height="5" rx="1"/><path class="k" d="M18.500 3.500H22V10H10.500v3"/><rect class="w" x="8" y="13" width="5" height="12"/></svg></button>
      </div>
      <h3>Values</h3>
      <div class="well">Add data fields here</div>
      <h2 class="drill">Drill through</h2>
      <h3 class="opt">Cross-report</h3>
      <div class="row"><label for="cross">Off</label><input class="sw" id="cross" type="checkbox" role="switch"></div>
      <h3 class="opt">Keep all filters</h3>
      <div class="row"><label for="keep">On</label><input class="sw" id="keep" type="checkbox" role="switch" checked></div>
      <div class="well low">Add drill-through fields here</div>`;
  }
}

/* ---------- fields pane ---------- */
const FI: Record<string, unknown> = {
  tree: svg`<g fill="#f2c811" stroke="#3b3a39" stroke-width="1.300"><path d="M1 .7h5v4H1zM9 6h5v4H9zM9 12h5v4H9z"/></g><path class="k" d="M3 8h4M5 6v4M3 14h4M5 12v4"/>`,
  sum: svg`<path class="k2" style="stroke-width:1.500" d="M12 4.500V2.700H3L8 8l-5 5.300h9v-2"/>`,
  date: svg`<path class="w" d="M.7 2.700h14.500v13H.7z"/><path class="k" d="M3.500 0v3M12 0v3M.7 5.500h14.500"/><path d="M3 8.500h10M3 12h10" stroke="#252423" stroke-width="2.400" stroke-dasharray="2 2"/>`,
};
const tbl = html`<svg width="17" height="16" viewBox="0 0 17 16" aria-hidden="true"><rect class="w" x=".7" y="1" width="15.500" height="14"/><path class="kf" d="M0 0h17v5H0z"/><path class="k" d="M1 8.500h15M1 12h15M6 5v10M11 5v10"/></svg>`;
const FIELDS: [string, string?, boolean?][] = [['City'], ['Country'], ['Customer ...'], ['Geography', 'tree', true], ['lat', 'sum'], ['lon', 'sum'], ['Order Date', 'date', true], ['Order ID'], ['Region'], ['Segment'], ['Ship Date', 'date', true], ['Ship Mode'], ['State']];

@customElement('pb-fields')
class PbFields extends LitElement {
  static styles = [iconCss, css`
    :host { display: block; background: #f3f2f1; font-size: 14px; line-height: 22px; color: #252423; box-sizing: border-box; }
    header { display: flex; justify-content: space-between; align-items: center; height: 63px; padding: 0 11px 0 15px; box-sizing: border-box; }
    h2 { font-size: 18px; line-height: 26px; font-weight: 600; color: #555351; margin: 0; }
    button { all: unset; cursor: pointer; display: flex; }
    .search { display: flex; align-items: center; gap: 10px; background: #fff; border: 1px solid #c8c6c4; border-radius: 3px; height: 37px; box-sizing: border-box; margin: 3px 4px 0; padding-left: 14px; }
    .search input { border: 0; outline: 0; font: inherit; min-width: 0; flex: 1; padding: 2px 0 0; background: none; }
    .search input::placeholder { color: #252423; opacity: 1; }
    hr { border: 0; border-top: 1px solid #dedddc; margin: 5px 0 13px; }
    .table { display: flex; align-items: center; height: 30px; padding-left: 4px; }
    .table svg + svg, .table button + svg { margin: 0 14px 0 9px; }
    .list { margin: 8px 0 4px; }
    .row { display: grid; grid-template-columns: 25px 20px 27px 1fr; align-items: center; height: 30px; padding-left: 14px; }
    input[type='checkbox'] { appearance: none; margin: 0; width: 15px; height: 15px; border: 1px solid #605e5c; border-radius: 3px; background: #f8f7f7; }
  `];
  render() {
    return html`
      <header><h2>Fields</h2><button aria-label="Collapse">${chev('right', 14, 1.3)}</button></header>
      <div class="search"><svg width="20" height="20" viewBox="0 0 20 20" aria-hidden="true"><circle class="k" cx="13" cy="7" r="6"/><path class="k" d="M8.500 11.500L.5 19"/></svg><input aria-label="Search" placeholder="Search"></div>
      <hr>
      <div class="table"><button aria-label="Collapse table">${chev('up', 16, 1.1)}</button>${tbl}<span>ListOfOrders</span></div>
      <div class="list">
        ${FIELDS.map(([n, ic, open], i) => html`<div class="row">
          ${open ? html`<button aria-label="Expand">${chev('down', 15, 1.1)}</button>` : html`<span></span>`}
          <input type="checkbox" id="f${i}">
          ${ic ? html`<svg width="16" height="16" viewBox="0 0 16 16" aria-hidden="true">${FI[ic]}</svg>` : html`<span></span>`}
          <label for="f${i}">${n}</label></div>`)}
      </div>
      <div class="table"><button aria-label="Expand table">${chev('down', 16, 1.1)}</button>${tbl}<span>OrderBreakdown</span></div>`;
  }
}

/* ---------- annotation layer ---------- */
@customElement('pb-annotations')
class PbAnnotations extends LitElement {
  static styles = css`
    :host { position: absolute; inset: 0; pointer-events: none; overflow: hidden; }
    svg { display: block; width: 100%; height: 100%; }
    path, rect { fill: none; stroke: #000; stroke-width: 2; }
    .thick { stroke-width: 3; }
    .fine { stroke-width: 1.3; }
    .faint { stroke: #d0d0d0; stroke-width: 1; }
    text { fill: #ed1c24; font-size: 34px; }
    .sm { font-size: 31px; }
  `;
  render() {
    return html`<svg aria-hidden="true">
      <path class="thick" d="M1421 145H1697"/><path class="thick" d="M1697 150V446H1719"/>
      <path d="M1375 144L1432 117 1415 144 1432 171Z"/>
      <rect x="1719" y="424" width="164" height="38" rx="15"/><rect x="1759" y="490" width="104" height="32" rx="13"/>
      <path class="thick" d="M1758 505.500H1252.500V535"/><path d="M1229 527L1251 540 1273 527 1251 567Z"/>
      <rect x="1472" y="271" width="40" height="35" rx="13"/>
      <path class="thick" d="M1467 290.500H1388V361M1388 358H1085M1084 290V527"/>
      <path d="M1084 264L1063 299 1084 287 1106 299Z"/><path d="M1059 516L1085 531 1111 516 1085 566Z"/>
      <path class="faint" d="M1089 364c6 8 8 18 2 26s-2 16-1 24M1035 423c-12 8-9 18-3 25s-2 14 5 18"/>
      <path class="fine" d="M350 825L336 854 350 845 365 854ZM350.500 840V899"/>
      <rect class="fine" x="277.500" y="900.500" width="180" height="56" rx="25"/>
      <text x="480" y="935">Step 1</text><text x="1095" y="403">Step 2</text>
      <text class="sm" x="1283" y="487">Step 3. a</text><text class="sm" x="1496" y="100">Step 3. b</text>
    </svg>`;
  }
}

/* ---------- application shell ---------- */
@customElement('app-root')
class AppRoot extends LitElement {
  @state() tab = 'Page 3';
  static styles = [iconCss, css`
    :host { display: flex; flex-direction: column; min-height: 100vh; position: relative; background: #f3f2f1; font-family: "Noto Sans", "Open Sans", sans-serif; color: #252423; }
    button { all: unset; cursor: pointer; box-sizing: border-box; }
    pb-ribbon { height: 88px; margin-bottom: 2px; z-index: 0; }
    .body { flex: 1; display: grid; grid-template-columns: 51px minmax(0, 1fr) 226px 223px; border-bottom: 2px solid #cfcdcb; }
    .rail { display: flex; flex-direction: column; padding-top: 1px; }
    .rail button { display: grid; place-items: center; height: 49px; border-left: 4px solid transparent; padding-left: 1px; margin-left: 1px; }
    .rail .on { border-color: #f2c811; }
    .main { display: grid; grid-template-rows: 1fr 43px; }
    .top { display: flex; background: #fff; }
    pb-report { flex: 1; min-width: 0; }
    .filters { width: 43px; border-left: 1px solid #b3b0ad; border-top: 1px solid #8ab0ea; background: #fff; display: flex; flex-direction: column; align-items: center; padding: 23px 2px 0 0; box-sizing: border-box; }
    .filters svg + svg, .filters button + svg { margin: 41px 0 15px; }
    .filters span { writing-mode: vertical-rl; font-size: 17px; font-weight: 600; line-height: 20px; }
    .pages { display: flex; align-items: stretch; font-size: 14px; color: #444; }
    .nav { display: flex; align-items: center; gap: 20px; width: 51px; justify-content: center; color: #c0bebc; border-right: 1px solid #a5a3a1; box-sizing: border-box; }
    .pg { border-right: 1px solid #b8b6b4; line-height: 46px; width: 96px; text-align: center; }
    .pg.cur { background: #fff; border-bottom: 3px solid #f2c811; }
    .add { background: #f2c811; width: 49px; margin: 2px 0 1px; display: grid; place-items: center; color: #6b6a60; }
    .foot { height: 4px; }
  `];
  render() {
    const rail = [
      ['Report', svg`<path class="k2" d="M1 0v17.500h17"/><path class="g" style="stroke:#3b3a39" d="M4 4h3v10H4zM9 7h3v7H9zM14 2h3v12h-3z"/>`],
      ['Data', svg`<path d="M.5.500h19.500v18H.5z" fill="#f8f8f8" stroke="#797775" stroke-width="1.400"/><path class="gl" d="M.5 4h19.500M.5 9h19.500M.5 13.500h19.500M7 4v14M13.500 4v14"/>`],
      ['Model', svg`<path class="gl" d="M8 9h4V3h2M9 12v6h5M1 7h9v9H1zM1 10.500h9M13 .5h9v8h-9zM13 3.500h9M13 13h9v8h-9zM13 16h9"/>`],
    ] as const;
    return html`
      <pb-ribbon></pb-ribbon>
      <div class="body">
        <nav class="rail">${rail.map(([n, i], k) => html`<button class=${classMap({ on: k === 0 })} aria-label=${n}><svg width="21" height="19" viewBox="0 0 21 19">${i}</svg></button>`)}</nav>
        <div class="main">
          <div class="top">
            <pb-report></pb-report>
            <aside class="filters">
              <button aria-label="Expand filters">${chev('left', 15, 1.3)}</button>
              <svg width="15" height="15" viewBox="0 0 15 15" aria-hidden="true"><path class="gl" d="M13 1v13L7 9H1.500V6H7z"/></svg>
              <span>Filters</span>
            </aside>
          </div>
          <div class="pages">
            <div class="nav"><button aria-label="Previous page"><svg width="6" height="10"><path d="M6 0L0 5l6 5z" fill="currentColor"/></svg></button><button aria-label="Next page"><svg width="6" height="10"><path d="M0 0l6 5-6 5z" fill="currentColor"/></svg></button></div>
            ${['Page 1', 'Page 2', 'Page 3'].map((p) => html`<button class=${classMap({ pg: true, cur: p === this.tab })} @click=${() => (this.tab = p)}>${p}</button>`)}
            <button class="add" aria-label="New page"><svg width="14" height="14"><path d="M7 0v14M0 7h14" stroke="currentColor" stroke-width="4"/></svg></button>
          </div>
        </div>
        <pb-visualizations></pb-visualizations>
        <pb-fields></pb-fields>
      </div>
      <div class="foot"></div>
      <pb-annotations></pb-annotations>`;
  }
}
